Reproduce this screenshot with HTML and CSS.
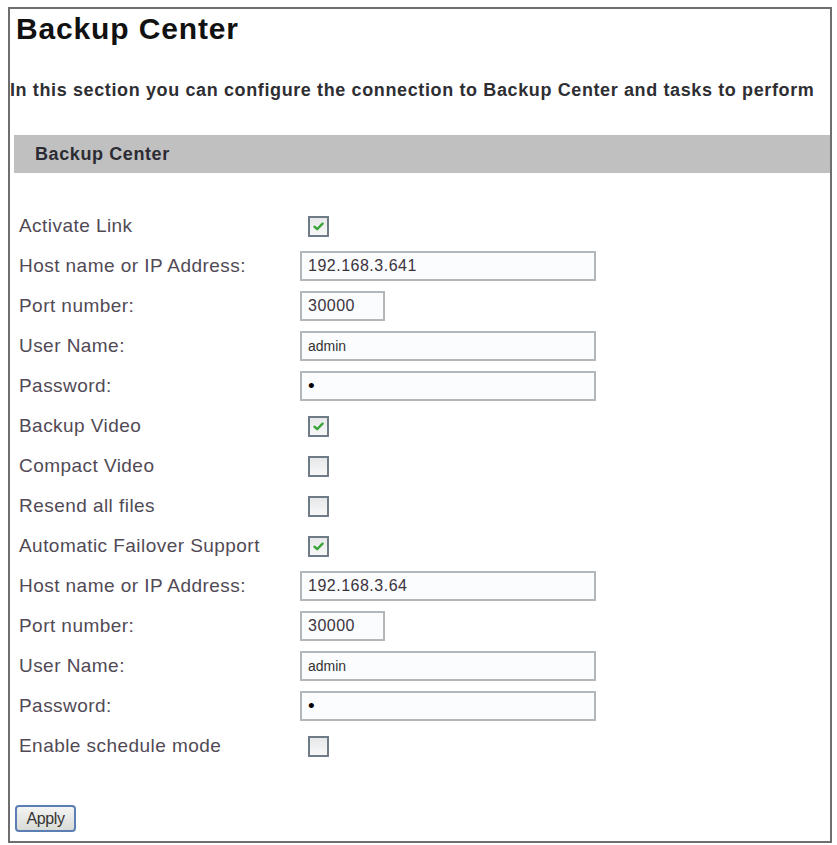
FILE: index.html
```html
<!DOCTYPE html>
<html lang="en">
<head>
  <meta charset="UTF-8" />
  <title>Backup Center</title>
  <link rel="stylesheet" href="styles.css">
</head>
<body>

  <div class="panel">
    <h1 class="title">Backup Center</h1>
    <p class="intro">In this section you can configure the connection to Backup Center and tasks to perform</p>

    <div class="section-bar">Backup Center</div>

    <form class="settings" onsubmit="return false">
      <label>Activate Link</label>
      <span class="check on"><svg viewBox="0 0 12 10"><path d="M1.5 5.2 L4.5 8 L10.5 1.8" /></svg></span>

      <label for="host1">Host name or IP Address:</label>
      <input type="text" id="host1" class="field wide ip" value="192.168.3.641" />

      <label for="port1">Port number:</label>
      <input type="text" id="port1" class="field short ip" value="30000" />

      <label for="user1">User Name:</label>
      <input type="text" id="user1" class="field wide" value="admin" />

      <label for="pass1">Password:</label>
      <input type="text" id="pass1" class="field wide dots" value="•" />

      <label>Backup Video</label>
      <span class="check on"><svg viewBox="0 0 12 10"><path d="M1.5 5.2 L4.5 8 L10.5 1.8" /></svg></span>

      <label>Compact Video</label>
      <span class="check"></span>

      <label>Resend all files</label>
      <span class="check"></span>

      <label>Automatic Failover Support</label>
      <span class="check on"><svg viewBox="0 0 12 10"><path d="M1.5 5.2 L4.5 8 L10.5 1.8" /></svg></span>

      <label for="host2">Host name or IP Address:</label>
      <input type="text" id="host2" class="field wide ip" value="192.168.3.64" />

      <label for="port2">Port number:</label>
      <input type="text" id="port2" class="field short ip" value="30000" />

      <label for="user2">User Name:</label>
      <input type="text" id="user2" class="field wide" value="admin" />

      <label for="pass2">Password:</label>
      <input type="text" id="pass2" class="field wide dots" value="•" />

      <label>Enable schedule mode</label>
      <span class="check"></span>
    </form>

    <button type="button" class="apply">Apply</button>
  </div>

</body>
</html>
```

FILE: styles.css
```css
body {
  margin: 0;
  background: #fff;
  font-family: "Liberation Sans", Arial, sans-serif;
}
.panel {
  width: 820px;
  height: 832px;
  margin: 7px 0 0 8px;
  border: 2px solid #6e6e6e;
  display: flex;
  flex-direction: column;
}
.title {
  margin: 2px 0 0 6px;
  font-size: 30px;
  line-height: 36px;
  letter-spacing: 0.85px;
  color: #111;
}
.intro {
  margin: 33px 0 0 0;
  font-size: 18px;
  line-height: 21px;
  font-weight: bold;
  letter-spacing: 0.62px;
  color: #2e2e33;
  white-space: nowrap;
}
.section-bar {
  margin: 34px 0 0 4px;
  height: 38px;
  line-height: 38px;
  padding-left: 21px;
  background: #c0c0c0;
  font-size: 18px;
  font-weight: bold;
  letter-spacing: 0.6px;
  color: #2b2b33;
}
.settings {
  margin-top: 33px;
  display: grid;
  grid-template-columns: 290px auto;
  grid-auto-rows: 40px;
  align-items: center;
  justify-items: start;
}
.settings label {
  padding-left: 9px;
  font-size: 19px;
  letter-spacing: 0.45px;
  color: #514a55;
}
.field {
  box-sizing: border-box;
  height: 30px;
  padding: 0 6px;
  border: 2px solid #b2b7bc;
  background: #fbfcfd;
  font-family: "Liberation Sans", Arial, sans-serif;
  font-size: 14px;
  color: #333;
}
.field.wide {
  width: 296px;
}
.field.short {
  width: 85px;
}
.field.ip {
  font-size: 16px;
  letter-spacing: 0.5px;
  color: #3c3440;
}
.field.dots {
  font-size: 19px;
  color: #000;
}
.check {
  box-sizing: border-box;
  width: 21px;
  height: 21px;
  margin-left: 8px;
  border: 2px solid #6f7b86;
  background: linear-gradient(#e6e8ea, #f8f8f8);
  display: flex;
  align-items: center;
  justify-content: center;
}
.check svg {
  width: 11px;
  height: 9px;
}
.check svg path {
  fill: none;
  stroke: #37a437;
  stroke-width: 2.6;
  stroke-linecap: round;
  stroke-linejoin: round;
}
.apply {
  align-self: flex-start;
  margin: 39px 0 0 5px;
  width: 61px;
  height: 27px;
  padding: 0;
  border: 2px solid #5b7fb4;
  border-radius: 4px;
  background: linear-gradient(#f4f4f4, #d9dbd6);
  font-family: "Liberation Sans", Arial, sans-serif;
  font-size: 16px;
  letter-spacing: -0.4px;
  color: #333;
}
```
